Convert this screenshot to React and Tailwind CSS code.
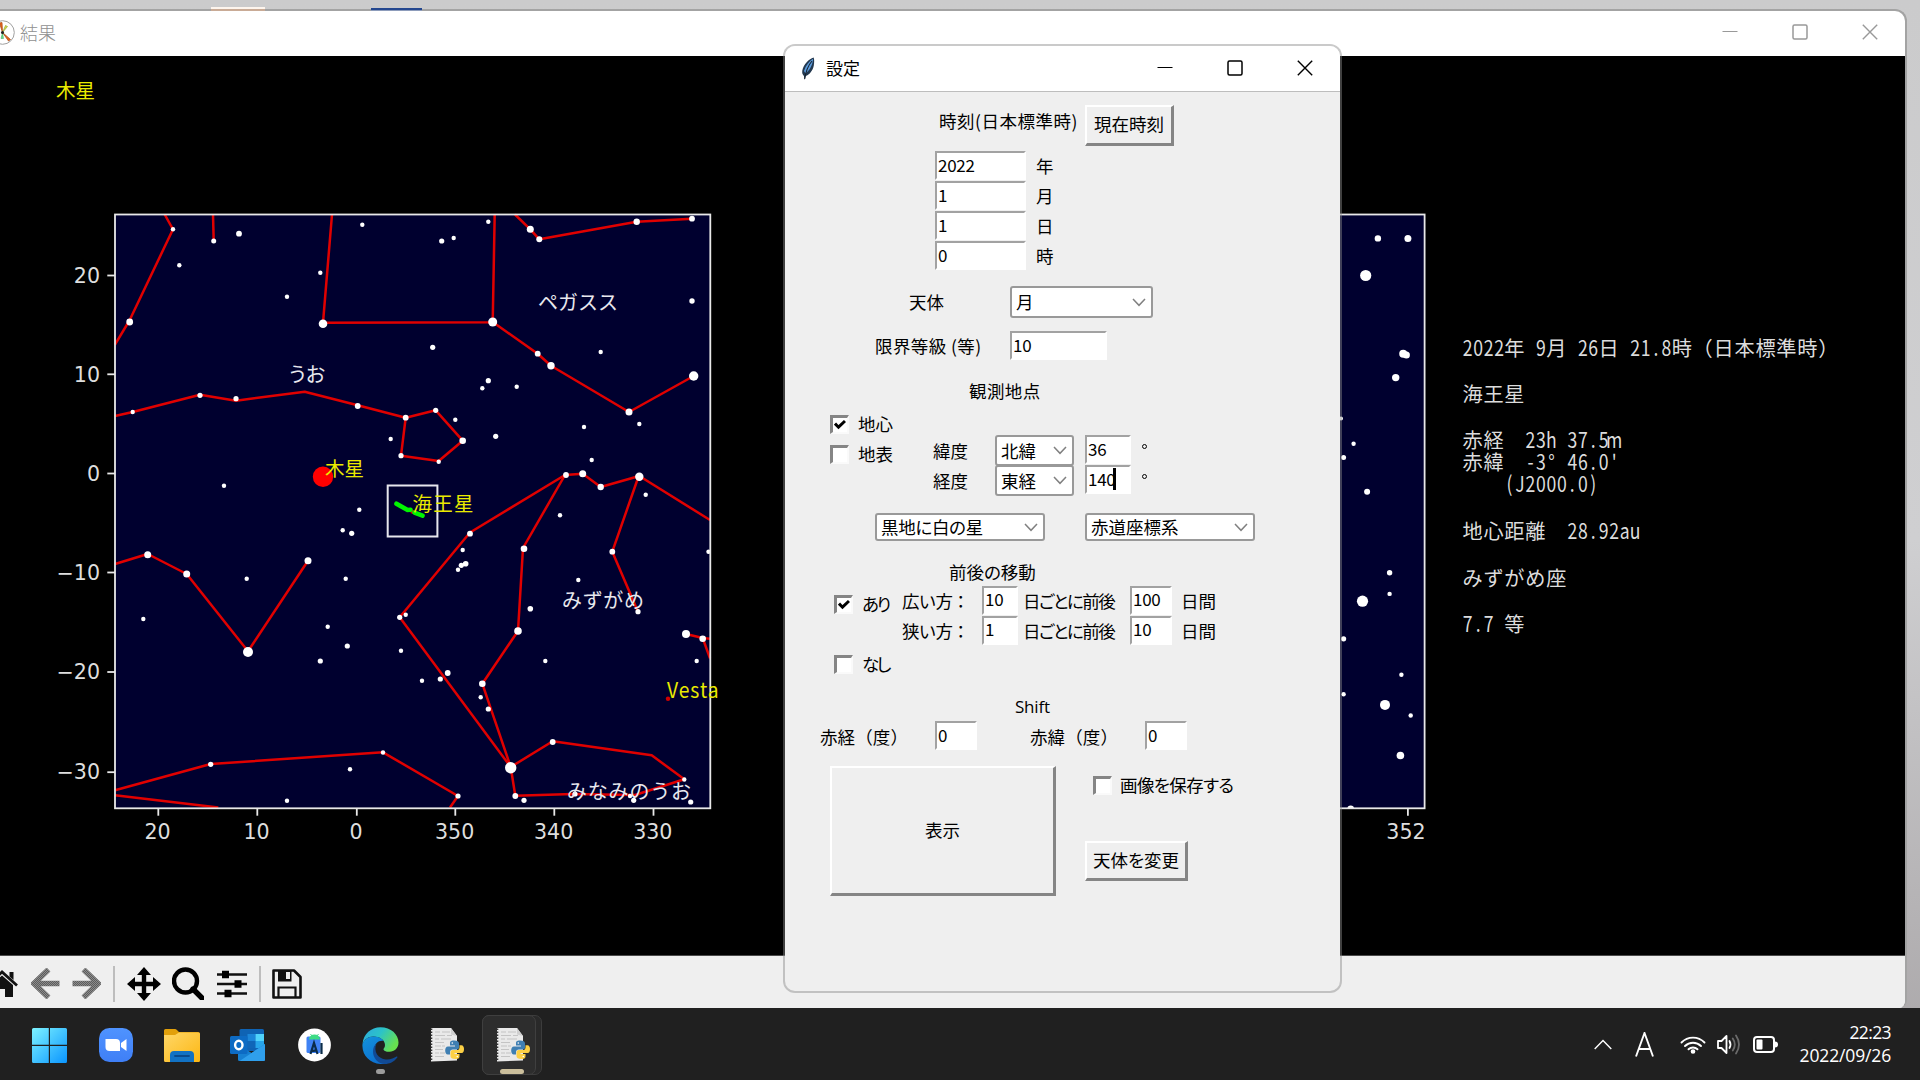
import React from "react";

const JP = '"Noto Sans CJK JP", sans-serif';

/* ---------- star chart data ---------- */

const LINES = [
  "164.7,214.5 173,229.3 129.7,320 115,344.7",
  "213,214.5 213.7,241",
  "332,214.5 323,322.8 492.7,322.3 494.7,214.5",
  "492.7,322 537.7,353.7 551,365.7 629,412 693.7,376",
  "515,214.5 530.3,229.3 539.3,239.3 636.7,221.7 692,218.7",
  "115,416 132.7,412 200,394.7 236,400.7 304.7,391.7 357.7,405.3 405.7,417.7 435.7,410.3 462.7,440.7 438.7,461 401,455.7 405.7,417.7",
  "582.7,473.7 565,475 470,532.5 399.7,617.3 510.7,767",
  "582.7,473.7 600.7,487 639.3,476 710,520",
  "565,475 523,548 518,631 482.3,683.7 510.7,767",
  "638,478 612.3,551.7 638,611.7",
  "686,634 702.7,638 710,638.7",
  "702.7,638 710,658.3",
  "510.7,767 552.7,741.3 651.7,755.3 684.3,779.3 635,795 573,794 515.3,795.7 510.7,767",
  "115,564 147.7,554 186.7,574 248,651.3 308,560.7",
  "115,790.3 210.7,764 383,752.3 458,796 450,807.5",
  "115,795.3 218.3,807.5",
];

const STARS = [
  [173, 229.3, 2.2], [129.7, 322, 3.4], [213.7, 241, 2.5], [239, 233.7, 2.9], [179.3, 265.3, 2.2],
  [287, 296.7, 2.2], [320.3, 272.7, 2.2], [323, 323.7, 4.3], [362.3, 224.7, 2.2], [132.7, 412, 2.2],
  [200, 395.3, 2.6], [236, 398.7, 2.6], [357.7, 406, 2.9], [390.7, 439, 2.2], [224, 485.7, 2.2],
  [359.3, 509.7, 2.2], [488.3, 221.7, 2.2], [441.7, 241, 2.6], [453.7, 238, 2.2], [530.3, 229.3, 3.5],
  [539.3, 239.3, 3], [636.7, 221.7, 3.2], [692, 218.7, 2.9], [492.7, 322, 4.5], [692, 301, 2.7],
  [432.7, 347.3, 2.6], [537.7, 353.7, 2.9], [551, 365.7, 3.7], [600.7, 352, 2.2], [482.3, 388.3, 2.2],
  [488.3, 380.7, 2.6], [516.7, 386.7, 2.2], [693.7, 376, 4.7], [629, 412, 3.5], [639.3, 424, 2.2],
  [405.7, 417.7, 2.9], [435.7, 410.3, 2.6], [455.3, 419.7, 2.2], [462.7, 440.7, 3.3], [495.7, 436.3, 2.6],
  [401, 455.7, 2.6], [438.7, 461.7, 2.2], [584, 427, 2.2], [591.7, 460, 2.2], [566, 475, 2.9],
  [582.7, 473.7, 3.5], [600.7, 487, 3.2], [639.3, 476.7, 4.2], [645.7, 494.7, 2.2], [560, 515.3, 2.2],
  [147.7, 554.7, 3.5], [186.7, 574, 3.5], [246.7, 578.7, 2.2], [308, 560.7, 3.5], [342.7, 530.3, 2.2],
  [351.7, 533.3, 2.6], [345.7, 578.7, 2.2], [143.3, 619, 2.2], [327.7, 626.7, 2.2], [347.3, 646, 2.6],
  [320.3, 661, 2.6], [248, 652, 5], [210.7, 764.3, 2.6], [350, 769.3, 2.2], [383, 752.5, 2.2],
  [287, 800.7, 2.2], [470, 533.7, 2.9], [524, 548.7, 3.3], [462.7, 550, 2.2], [465.7, 563.7, 2.8],
  [461.3, 565.3, 2.6], [458, 569.7, 2.2], [578.3, 580, 2.2], [612.3, 551.7, 2.9], [708.5, 551.7, 2.2],
  [530.3, 608.7, 2.8], [518, 631, 3.8], [399.7, 617.3, 2.6], [405.7, 614.7, 2.2], [638, 611.7, 2.6],
  [686, 634, 4], [702.7, 638.7, 3.3], [545.3, 661, 2.2], [696.7, 661, 2.2], [401, 650.7, 2.2],
  [422, 680.7, 2.2], [440.3, 679, 2.6], [447.7, 673, 2.9], [482.3, 683.7, 3.3], [480.7, 697.3, 2.2],
  [488.3, 709, 2.6], [510.7, 767.7, 5.7], [552.7, 742, 2.9], [515.3, 796, 2.9], [524, 800.3, 2.6],
  [575, 794, 2.6], [630, 796, 2.2], [633.7, 800.3, 2.6], [684.3, 779.5, 2.2], [690.7, 802, 2.6],
  [458, 796, 2.6],
];

const RIGHT_STARS = [
  [1377.9, 238.4, 3.2], [1407.9, 238.4, 3.5], [1365.7, 275.5, 5.6], [1403.2, 353.7, 4], [1406.4, 355.1, 3.5],
  [1395.7, 377.6, 3.7], [1341, 418.4, 2], [1353.6, 443.7, 2.2], [1343.6, 457.6, 2.5], [1367.1, 491.8, 3],
  [1389.6, 572.7, 2.7], [1389.6, 593.9, 2.2], [1362.5, 601.2, 5.6], [1343.6, 638.8, 2.6], [1401.4, 674.7, 2.2],
  [1343.6, 694.3, 2.2], [1385, 704.9, 5], [1410.7, 715.5, 2.2], [1400.4, 755.5, 3.8],
];

const Y_TICKS = [["20", 275.5], ["10", 374.3], ["0", 473.5], ["−10", 572.5], ["−20", 672], ["−30", 772.2]];
const X_TICKS = [["20", 158.3], ["10", 257.3], ["0", 356.8], ["350", 455.3], ["340", 554.3], ["330", 653.5]];

/* Information column: [cell, text] runs laid on a half-width cell grid */
const CELL = 10.46;
const INFO = [
  [356, [[0, "2022"], [4, "年"], [7, "9"], [8, "月"], [11, "26"], [13, "日"], [16, "21.8"], [20, "時"], [22, "（日本標準時）"]]],
  [402, [[0, "海王星"]]],
  [447.5, [[0, "赤経"], [6, "23h"], [10, "37.5m"]]],
  [470, [[0, "赤緯"], [6, "-3°"], [10, "46.0'"]]],
  [492.3, [[4, "(J2000.0)"]]],
  [539.4, [[0, "地心距離"], [10, "28.92au"]]],
  [585.5, [[0, "みずがめ座"]]],
  [632, [[0, "7.7"], [4, "等"]]],
];

function Run({ cell, text, y }) {
  const x0 = 1462.5 + cell * CELL;
  if (text.charCodeAt(0) > 255) {
    const xs = [...text].map((_, i) => x0 + i * CELL * 2).join(" ");
    return <text x={xs} y={y} fontSize="20.2">{text}</text>;
  }
  const k = 0.82;
  const xs = [...text].map((_, i) => ((i + 0.5) * CELL) / k).join(" ");
  return (
    <text transform={`translate(${x0} ${y}) scale(${k} 1)`} x={xs} textAnchor="middle" fontSize="21.5">
      {text}
    </text>
  );
}

function Figure() {
  return (
    <svg className="block flex-none" width="1905" height="900" viewBox="0 56 1905 900">
      <rect x="0" y="56" width="1905" height="900" fill="#000" />
      <rect x="115" y="214.5" width="595.3" height="593.8" fill="#00002f" />
      <g fill="none" stroke="#e00000" strokeWidth="2.5" strokeLinejoin="round">
        {LINES.map((p) => <polyline key={p} points={p} />)}
      </g>
      <g fill="#fff">
        {STARS.map(([x, y, r], i) => <circle key={i} cx={x} cy={y} r={r} />)}
      </g>
      <circle cx="323" cy="476.7" r="10.2" fill="#f00" />
      <rect x="387.7" y="485.5" width="49.7" height="51" fill="none" stroke="#e6e6ee" strokeWidth="2" />
      <circle cx="412.3" cy="511.7" r="2" fill="#e00000" />
      <path d="M396.500 503.700 L407.500 510 L410.500 509.800 M414.500 512.600 L422.500 515.600" fill="none" stroke="#00f500" strokeWidth="4.600" strokeLinecap="round" />
      <circle cx="668" cy="698.7" r="2.2" fill="#d00000" />
      <rect x="115" y="214.5" width="595.3" height="593.8" fill="none" stroke="#e8e8e8" strokeWidth="1.8" />
      <g stroke="#e8e8e8" strokeWidth="1.8">
        {Y_TICKS.map(([t, y]) => <line key={t} x1="107.3" x2="115" y1={y} y2={y} />)}
        {X_TICKS.map(([t, x]) => <line key={t} x1={x} x2={x} y1="808" y2="815.7" />)}
        <line x1="1407.9" x2="1407.9" y1="808" y2="815.7" />
      </g>
      <g fill="#dedede" fontFamily='"DejaVu Sans", sans-serif' fontSize="20.6">
        {Y_TICKS.map(([t, y]) => <text key={t} x="100" y={y + 7.2} textAnchor="end">{t}</text>)}
        {X_TICKS.map(([t, x]) => <text key={t} x={x - 0.7} y="839" textAnchor="middle">{t}</text>)}
        <text x="1406" y="839" textAnchor="middle">352</text>
      </g>

      <g fontFamily={JP} fill="#e8e8ee" fontSize="20">
        <text x="287.5" y="382" textLength="38">うお</text>
        <text x="538" y="310" textLength="80">ペガスス</text>
        <text x="562" y="608" textLength="82">みずがめ</text>
        <text x="567" y="798.5" textLength="124">みなみのうお</text>
      </g>
      <g fontFamily={JP} fill="#eaea00" fontSize="19.5">
        <text x="56" y="97.5">木星</text>
        <text x="325" y="475.5">木星</text>
        <text x="412.5" y="511" textLength="61">海王星</text>
        <text transform="translate(667 698) scale(.92 1)" fontSize="21" textLength="56">Vesta</text>
      </g>

      <rect x="1000" y="214.5" width="424.6" height="593.8" fill="#00002f" />
      <g fill="#fff">
        {RIGHT_STARS.map(([x, y, r], i) => <circle key={i} cx={x} cy={y} r={r} />)}
        <path d="M1347.5 808 a3.2 2.6 0 0 1 6.4 0z" />
      </g>
      <rect x="1000" y="214.5" width="424.6" height="593.8" fill="none" stroke="#e8e8e8" strokeWidth="1.8" />
      <g fontFamily={JP} fill="#dcdcdc">
        {INFO.map(([y, runs]) => runs.map(([c, t]) => <Run key={y + t} cell={c} text={t} y={y} />))}
      </g>
      <path d="M0 955.500h1905" stroke="#4a4a4a" />
    </svg>
  );
}

/* ---------- window controls ---------- */

function Controls({ color, className }) {
  return (
    <div className={className}>
      <svg width="16" height="16" viewBox="0 0 16 16" stroke={color} strokeWidth="1.1" fill="none"><path d="M.5 7.500h15" /></svg>
      <svg width="16" height="16" viewBox="0 0 16 16" stroke={color} strokeWidth="1.5" fill="none"><rect x="1" y="1" width="14" height="14" rx="1.5" /></svg>
      <svg width="16" height="16" viewBox="0 0 16 16" stroke={color} strokeWidth="1.4" fill="none"><path d="M.8.8l14.4 14.4M15.2.8L.8 15.2" /></svg>
    </div>
  );
}

/* ---------- classic form widgets ---------- */

const L = ({ className = "", children }) => (
  <span className={"flex-none whitespace-nowrap text-[17.5px] leading-6 " + className}>{children}</span>
);

const Entry = ({ className = "", children }) => (
  <div className={"flex h-[29px] flex-none items-center border-t-2 border-l-2 border-r-2 border-b-2 border-t-[#a2a2a2] border-l-[#a2a2a2] border-r-white border-b-white bg-white pb-[2px] pl-[1px] text-[17px] leading-5 tracking-[-0.3px] " + className}>
    {children}
  </div>
);

const Combo = ({ className = "", children }) => (
  <div className={"flex flex-none items-center justify-between rounded-[3px] border-2 border-[#999] bg-white pr-[5px] pl-[4px] text-[17.5px] leading-6 " + className}>
    <span className="whitespace-nowrap">{children}</span>
    <svg width="14" height="9" viewBox="0 0 14 9" fill="none" stroke="#808080" strokeWidth="1.5"><path d="M1 1l6 6.3L13 1" /></svg>
  </div>
);

const Check = ({ on, className = "" }) => (
  <div className={"flex h-[19px] w-[19px] flex-none items-center justify-center border-t-[3px] border-l-[3px] border-r-2 border-b-2 border-t-[#858585] border-l-[#858585] border-r-[#fafafa] border-b-[#fafafa] bg-white " + className}>
    {on && <svg width="12" height="12" viewBox="0 0 12 12" fill="none" stroke="#000" strokeWidth="3"><path d="M1 4.6l3.5 3.600L11 2" /></svg>}
  </div>
);

const Button = ({ className = "", children }) => (
  <div className={"flex flex-none items-center justify-center border-t-2 border-l-2 border-r-[3px] border-b-[3px] border-t-white border-l-white border-r-[#858585] border-b-[#858585] bg-[#efefef] text-[17.5px] leading-6 whitespace-nowrap " + className}>
    {children}
  </div>
);

const Row = ({ className = "", children }) => <div className={"flex items-center " + className}>{children}</div>;

function Feather() {
  return (
    <svg width="14" height="24" viewBox="0 0 14 24">
      <path d="M12.6.6C8 2 2.600 7.500 1.300 13.500c-.4 2.500.2 4 1.600 5.500L3.600 23l1-4c4-1 7.400-6 8.200-10.500.5-3 .6-6-.2-7.900z" fill="#23384f" />
      <path d="M12 1.800C8.500 4 5 8 3 14l1.500 2.500C9 13 12 7 12 1.800z" fill="#5b9bdc" />
      <path d="M11 4C7.500 8 5 13 3.700 22" stroke="#16202c" strokeWidth="1.100" fill="none" />
    </svg>
  );
}

function Dialog() {
  return (
    <div className="absolute left-[783px] top-[44px] h-[949px] w-[559px] overflow-hidden rounded-[12px] border-2 border-[#8c8c8c75] bg-[#efefef] bg-clip-padding text-black">
      <div className="flex h-[46px] items-center border-b border-[#bdbdbd] bg-white pl-[16px] pr-[27px]">
        <Feather />
        <span className="mb-[2px] ml-[11px] text-[17px] leading-6">設定</span>
        <Controls color="#000" className="mb-[2px] ml-auto flex gap-[54px]" />
      </div>

      <Row className="mt-[13px] h-[40px]">
        <L className="mb-[9px] ml-[154px] w-[146px] tracking-[0.5px]">時刻(日本標準時)</L>
        <Button className="h-[41px] w-[89px] pb-px">現在時刻</Button>
      </Row>
      <div className="mt-[6px] flex flex-col">
        {[["2022", "年"], ["1", "月"], ["1", "日"], ["0", "時"]].map(([v, u]) => (
          <Row key={u} className="h-[30px]">
            <Entry className="mb-px ml-[150px] w-[91px]">{v}</Entry>
            <L className="ml-[10px]">{u}</L>
          </Row>
        ))}
      </div>

      <Row className="mt-[15px] h-[32px]">
        <L className="mb-px ml-[124px] w-[101px]">天体</L>
        <Combo className="h-[32px] w-[143px]">月</Combo>
      </Row>
      <Row className="mt-[13px] h-[29px]">
        <L className="ml-[90px] w-[135px] tracking-[0.4px]">限界等級 (等)</L>
        <Entry className="w-[97px]">10</Entry>
      </Row>

      <L className="mt-[19px] block pl-[184px] tracking-[0.4px]">観測地点</L>
      <div className="mt-[9px] flex h-[86px]">
        <div className="-mt-[3px] ml-[45px] w-[103px]">
          <Row className="h-[30px]"><Check on className="mr-[9px]" /><L>地心</L></Row>
          <Row className="h-[30px]"><Check className="mr-[9px]" /><L>地表</L></Row>
        </div>
        <div className="mt-[23px] flex flex-col">
          {[["緯度", "北緯", "36"], ["経度", "東経", "140"]].map(([a, b, c]) => (
            <Row key={a} className="h-[30px] items-start">
              <L className="mt-[4px] w-[62px]">{a}</L>
              <Combo className="h-[31px] w-[79px]">{b}</Combo>
              <Entry className="ml-[11px] w-[46px]">
                {c}
                {c === "140" && <span className="-ml-[2px] h-[22px] w-[3px] flex-none bg-black" />}
              </Entry>
              <span className="mt-[9px] ml-[11px] h-[5px] w-[5px] rounded-full border-[1.5px] border-black" />
            </Row>
          ))}
        </div>
      </div>

      <Row className="mt-[13px] h-[32px]">
        <Combo className="ml-[90px] w-[170px] tracking-[-0.3px] [font-feature-settings:'palt']">黒地に白の星</Combo>
        <Combo className="ml-[40px] w-[170px]">赤道座標系</Combo>
      </Row>

      <L className="mt-[17px] block pl-[164px] [font-feature-settings:'palt']">前後の移動</L>
      <div className="mt-px flex">
        <div className="ml-[49px] w-[68px] pt-[4px]">
          <Row className="h-[30px]"><Check on className="mr-[9px]" /><L className="tracking-[-2.5px] [font-feature-settings:'palt']">あり</L></Row>
          <Row className="mt-[30px] h-[30px]"><Check className="mr-[9px]" /><L className="tracking-[-2.5px] [font-feature-settings:'palt']">なし</L></Row>
        </div>
        <div className="flex flex-col">
          {[["広い方：", "10", "100"], ["狭い方：", "1", "10"]].map(([a, b, c]) => (
            <Row key={a} className="h-[30px]">
              <L className="mt-[2px] w-[80px] tracking-[-0.8px]">{a}</L>
              <Entry className="w-[36px]">{b}</Entry>
              <L className="mt-[2px] ml-[5px] w-[107px] tracking-[-1.5px] [font-feature-settings:'palt']">日ごとに前後</L>
              <Entry className="w-[42px]">{c}</Entry>
              <L className="mt-[2px] ml-[9px]">日間</L>
            </Row>
          ))}
        </div>
      </div>

      <span className="mt-[16px] block pl-[230px] font-['Open_Sans',sans-serif] text-[17px] leading-6 tracking-[-0.2px]">Shift</span>
      <Row className="mt-[2px] h-[29px]">
        <L className="ml-[35px] mt-[2px] w-[115px] tracking-[0.1px]">赤経（度）</L>
        <Entry className="w-[42px]">0</Entry>
        <L className="ml-[53px] mt-[2px] w-[115px] tracking-[0.1px]">赤緯（度）</L>
        <Entry className="w-[42px]">0</Entry>
      </Row>

      <div className="mt-[16px] flex">
        <Button className="ml-[45px] h-[130px] w-[226px] pb-[2px]">表示</Button>
        <div className="ml-[29px] flex flex-col">
          <Row className="mt-[4px] ml-[8px] h-[30px]">
            <Check className="mr-[8px]" />
            <L className="tracking-[-0.6px] [font-feature-settings:'palt']">画像を保存する</L>
          </Row>
          <Button className="mt-[41px] h-[40px] w-[103px] pb-px [font-feature-settings:'palt']">天体を変更</Button>
        </div>
      </div>
    </div>
  );
}

/* ---------- plot toolbar ---------- */

function Toolbar() {
  return (
    <div className="flex h-[52px] flex-none items-center bg-[#efefef] pt-[3px]">
      <svg className="-ml-[14px] flex-none" width="32" height="28" viewBox="0 0 32 28">
        <path d="M16 5.500L5 15v12h8v-8h6v8h8V15z" fill="#111" />
        <path d="M1 15.500L16 2l15 13.500" fill="none" stroke="#111" strokeWidth="2.800" />
        <path d="M23.500 2h4v8l-4-3.500z" fill="#111" />
      </svg>
      {[false, true].map((flip) => (
        <svg key={String(flip)} className={flip ? "ml-[12px] flex-none -scale-x-100" : "ml-[13px] flex-none"} width="29" height="31" viewBox="0 0 29 31">
          <defs>
            <pattern id={flip ? "dotF" : "dotB"} width="2" height="2" patternUnits="userSpaceOnUse">
              <rect width="2" height="2" fill="#8c8c8c" /><path d="M0 0h1v1H0zM1 1h1v1H1z" fill="#5c5c5c" />
            </pattern>
          </defs>
          <path d="M17.500 1.500L3 15.500l14.500 14M4 15.500h24.500" fill="none" stroke={flip ? "url(#dotF)" : "url(#dotB)"} strokeWidth="5.500" />
        </svg>
      ))}
      <div className="ml-[12px] h-[36px] w-[2px] bg-[#bdbdbd]" />
      <svg className="ml-[12px] flex-none" width="34" height="34" viewBox="0 0 34 34">
        <path d="M17 3v28M3 17h28" stroke="#000" strokeWidth="4.400" />
        <path d="M17 0l7 8h-14zM17 34l7-8h-14zM0 17l8-7v14zM34 17l-8-7v14z" fill="#000" />
      </svg>
      <svg className="ml-[11px] flex-none" width="32" height="33" viewBox="0 0 32 33" fill="none" stroke="#000">
        <circle cx="13.500" cy="14" r="11.500" strokeWidth="4.400" />
        <path d="M21 22l9 9" strokeWidth="5.400" strokeLinecap="round" />
      </svg>
      <svg className="ml-[13px] flex-none" width="30" height="28" viewBox="0 0 30 28">
        <path d="M0 4.500h30M0 14h30M0 23.500h30" stroke="#111" strokeWidth="2.600" />
        <path d="M5 .8h7v7.400H5zM17.500 10.300h7v7.400h-7zM7.500 19.800h7v7.400h-7z" fill="#000" />
      </svg>
      <div className="ml-[12px] h-[36px] w-[2px] bg-[#bdbdbd]" />
      <svg className="ml-[11px] flex-none" width="30" height="30" viewBox="0 0 30 30">
        <path d="M1.500 1.500h20.500L28.500 8v20.500h-27z" fill="none" stroke="#111" strokeWidth="2.600" strokeLinejoin="round" />
        <path d="M6 2h13.500v10.500H6z" fill="#111" />
        <path d="M14 3h4v7h-4z" fill="#efefef" />
        <path d="M6.500 28V18.500h17V28" fill="none" stroke="#111" strokeWidth="2.200" />
      </svg>
    </div>
  );
}

/* ---------- taskbar ---------- */

function PyFile({ className = "" }) {
  return (
    <svg className={className} width="34" height="36" viewBox="0 0 34 36">
      <path d="M1 1h20l6 8v24.500l-26 1z" fill="#e9e9e9" />
      <path d="M1.500 1.500v33" stroke="#333" strokeWidth="1.600" strokeDasharray="1.500 1.500" />
      <path d="M5 5h5M12 5h8M5 8.500h10M17 8.500h5M5 12h4M11 12h10M5 15.500h9M5 19h6M12 19h3M5 22.500h8M5 26h4M10 26h5M5 29.500h9" stroke="#c4c4c4" strokeWidth="1.200" />
      <path d="M21 1l6 8-6-1.500z" fill="#cfcfcf" />
      <path d="M24 13.500c-3.500 0-4 1.200-4 3v2h5v1h-7c-2 0-2.800 2-2.800 4s.8 4 2.600 4H20v-2.300c0-1.700 1.200-2.700 2.800-2.700h4c1.500 0 2.200-1 2.200-2.300V16.500c0-2-1.500-3-5-3z" fill="#3f7fb3" />
      <path d="M25.500 32c3.500 0 4-1.200 4-3v-2h-5v-1h7c2 0 2.500-2 2.500-4s-.8-3.800-2.500-3.800h-2v2.300c0 1.700-1.200 2.600-2.700 2.600h-4c-1.500 0-2.300 1-2.300 2.400V29c0 2 1.500 3 5 3z" fill="#fcd045" />
      <circle cx="22.300" cy="16" r=".8" fill="#fff" />
      <circle cx="27.300" cy="29.500" r=".8" fill="#fff" />
    </svg>
  );
}

function Taskbar() {
  return (
    <div className="flex h-[72px] flex-none items-start bg-[#202020] text-white">
      <svg className="mt-[20px] ml-[32px] flex-none" width="35" height="35" viewBox="0 0 35 35">
        <defs><linearGradient id="win" gradientUnits="userSpaceOnUse" x1="0" y1="0" x2="35" y2="35"><stop offset="0" stopColor="#7df3ff" /><stop offset="1" stopColor="#0a95ff" /></linearGradient></defs>
        <path d="M1.500 0H16.800v16.800H0V1.500Q0 0 1.500 0zM18 0h15.500Q35 0 35 1.500v15.300H18zM0 18h16.800v17H1.500Q0 35 0 33.500zM18 18h17v15.500q0 1.500-1.500 1.500H18z" fill="url(#win)" />
      </svg>
      <svg className="mt-[20px] ml-[32px] flex-none" width="34" height="34" viewBox="0 0 34 34">
        <defs><linearGradient id="zm" x1="0" y1="0" x2="0" y2="1"><stop offset="0" stopColor="#4f93ff" /><stop offset="1" stopColor="#3f7ff6" /></linearGradient></defs>
        <rect width="34" height="34" rx="10.500" fill="url(#zm)" />
        <path d="M6.500 11h10.500q4 0 4 4v8H10.500q-4 0-4-4z" fill="#fff" />
        <path d="M22 15l5.500-4v12L22 19z" fill="#fff" />
      </svg>
      <svg className="mt-[21px] ml-[31px] flex-none" width="36" height="33" viewBox="0 0 36 33">
        <defs><linearGradient id="fd" x1="0" y1="0" x2="1" y2="1"><stop offset="0" stopColor="#ffd768" /><stop offset="1" stopColor="#fcb713" /></linearGradient></defs>
        <path d="M0 1.500Q0 0 1.500 0h9.500q1 0 1.700.8L15 3h19q2 0 2 2v6H0z" fill="#e2a00b" />
        <path d="M0 6h11l4-2.500h19.500Q36 3.500 36 5v26.500q0 1.500-1.500 1.500h-33Q0 33 0 31.500z" fill="url(#fd)" />
        <path d="M6 33v-7q0-4 4-4h16q4 0 4 4v7z" fill="#1272c4" />
        <path d="M11 27h14" stroke="#0a4a8c" strokeWidth="1.800" strokeLinecap="round" />
      </svg>
      <svg className="mt-[21px] ml-[30px] flex-none" width="35" height="32" viewBox="0 0 35 32">
        <rect x="9.500" y="0" width="24.500" height="22" rx="1.500" fill="#0f63b4" />
        <path d="M17.500 5h8v7h-8z" fill="#1c86d9" /><path d="M25.500 5H34v7h-8.500z" fill="#50d3fb" /><path d="M17.500 12h8v7h-8z" fill="#1066b8" /><path d="M25.500 12H34v7h-8.500z" fill="#27a5ea" />
        <path d="M8 15l13.500 9L35 15v15.500q0 1.500-1.500 1.500h-24Q8 32 8 30.500z" fill="#1680d2" />
        <path d="M35 15L10 31.700q.5.300 1 .3h22.500q1.500 0 1.500-1.500z" fill="#2f9fec" />
        <rect x="0" y="7" width="17.500" height="18" rx="1.500" fill="#0d6bc4" />
        <ellipse cx="8.800" cy="16" rx="3.700" ry="4.200" fill="none" stroke="#fff" strokeWidth="2.400" />
      </svg>
      <svg className="mt-[20px] ml-[33px] flex-none" width="33" height="34" viewBox="0 0 33 34">
        <circle cx="16.500" cy="17" r="16.400" fill="#fff" />
        <rect x="8.500" y="8.500" width="14" height="16.500" rx="1.500" fill="#3f82f4" />
        <path d="M11 11.500a5.500 5 0 0 1 11 0z" fill="#3ddc84" />
        <path d="M12.500 6l1.500 2M20.500 6L19 8" stroke="#3ddc84" strokeWidth="1" />
        <path d="M12.500 26l3.500-11 3.500 11M13 22.500q3 1 5.500-.5M23.500 15v11" stroke="#0b2c49" strokeWidth="2.200" fill="none" />
      </svg>
      <div className="mt-[19px] ml-[31px] flex w-[37px] flex-none flex-col items-center">
        <svg width="37" height="37" viewBox="0 0 37 37">
          <defs>
            <linearGradient id="e1" x1="0" y1="0" x2="1" y2="0.5"><stop offset="0" stopColor="#2ca7e0" /><stop offset=".5" stopColor="#2cc3c8" /><stop offset="1" stopColor="#67e04f" /></linearGradient>
            <linearGradient id="e2" x1="0" y1="0" x2="0.6" y2="1"><stop offset="0" stopColor="#1393dc" /><stop offset="1" stopColor="#0c6fd0" /></linearGradient>
          </defs>
          <path d="M.5 17C1.500 7 9 .3 18.500.3 29 .3 36.500 7.500 36.500 15.500c0 5.500-4 9.300-9 9.300-3.500 0-6-1.200-6-2.600 0-.8 1.500-1.500 1.500-4.200C23 13 17.500 9.500 11.500 9.500 6 9.500 2 13 .5 17z" fill="url(#e1)" />
          <path d="M.5 17C2 12.500 6.500 9.500 11.500 9.500c5 0 8.500 2 10.300 4.600-5-1.300-10 3-9.300 9.400.7 7 6 12.300 12.500 13-2 .5-4 .6-6.500.5C7.500 36.500-.5 27.500.5 17z" fill="url(#e2)" />
          <path d="M14.500 16.500C11 24 16 32 24 32.500c4.500.3 8-1.500 10.500-3 .7-.4 1.200.3.8 1-3.300 4.500-8 6.500-12.300 6.500-7 0-12-6-12-12.500 0-3.500 1.300-6.500 3.500-8z" fill="#114a95" />
        </svg>
        <div className="mt-[5px] h-[5px] w-[9px] rounded-full bg-[#9c9c9c]" />
      </div>
      <PyFile className="mt-[19px] ml-[31px] flex-none" />
      <div className="mt-[7px] ml-[18px] flex h-[60px] w-[60px] flex-none rounded-[7px] border border-[#3c3c3c] bg-[#292929]">
        <div className="-mt-px -ml-px flex h-[60px] w-[54px] flex-col items-center rounded-[7px] border border-[#3f3f3f] bg-[#2d2d2d] pt-[11px]">
          <PyFile className="ml-[7px]" />
          <div className="mt-[6px] ml-[6px] h-[5px] w-[24px] flex-none rounded-full bg-[#cbbf9c]" />
        </div>
      </div>

      <div className="ml-auto flex h-[72px] items-center">
        <svg width="18" height="11" viewBox="0 0 18 11" fill="none" stroke="#fff" strokeWidth="1.400"><path d="M.7 10L9 1.500l8.300 8.500" /></svg>
        <svg className="ml-[23px]" width="19" height="25" viewBox="0 0 19 25" fill="none" stroke="#fff" strokeWidth="1.900"><path d="M1 24.500L9.500 1 18 24.500M3.800 17h11.400" /></svg>
        <svg className="ml-[26px]" width="26" height="19" viewBox="0 0 26 19" fill="none" stroke="#fff" strokeWidth="1.900" strokeLinecap="round">
          <path d="M1.500 7.500a16 16 0 0 1 23 0M5 11a11.300 11.300 0 0 1 16 0M8.500 14.300a6.500 6.500 0 0 1 9 0" />
          <circle cx="13" cy="16.500" r="1.400" fill="#fff" />
        </svg>
        <svg className="ml-[11px]" width="24" height="21" viewBox="0 0 24 21" fill="none" strokeWidth="1.800" strokeLinejoin="round" strokeLinecap="round">
          <path d="M1 7h3.500L9.500 2v17l-5-5H1z" stroke="#fff" />
          <path d="M12.500 7q2 3.500 0 7" stroke="#fff" />
          <path d="M15.800 4.500q4 6 0 12M19 1.500q6 9 0 18" stroke="#6b6b6b" />
        </svg>
        <svg className="ml-[12px]" width="25" height="17" viewBox="0 0 25 17">
          <rect x="1" y="1" width="20" height="15" rx="3" fill="none" stroke="#fff" strokeWidth="2" />
          <rect x="3.500" y="3.500" width="6" height="10" rx="1" fill="#fff" />
          <path d="M22 5.500q3 0 3 3t-3 3z" fill="#fff" />
        </svg>
        <div className="mr-[29px] ml-[19px] flex w-[94px] flex-col items-end font-['Open_Sans',sans-serif] text-[17.5px] leading-[23px]">
          <span className="tracking-[-0.6px]">22:23</span>
          <span className="tracking-[-0.15px]">2022/09/26</span>
        </div>
      </div>
    </div>
  );
}

/* ---------- desktop ---------- */

export default function App() {
  return (
    <div className="relative flex h-[1080px] w-[1920px] flex-col overflow-hidden bg-gradient-to-b from-[#cbcbcc] via-[#cfcfd1] to-[#a9a6a8] font-['Noto_Sans_CJK_JP',sans-serif]">
      <div className="flex h-[9px] flex-none items-start pt-[7px]">
        <div className="relative z-10 ml-[211px] h-[4px] w-[54px] flex-none border-t-2 border-[#fdf5ee] bg-[#c9ab96]" />
        <div className="relative z-10 mt-px ml-[106px] h-[3px] w-[51px] flex-none border-t-2 border-[#24478f] bg-[#8d9cbb]" />
      </div>
      <div className="flex h-[999px] w-[1907px] flex-none flex-col overflow-hidden rounded-tr-[12px] rounded-br-[8px] border-t-2 border-r-2 border-[#a3a3a3] bg-white">
        <div className="flex h-[45px] flex-none items-center">
          <svg className="mb-[3px] -ml-[10px]" width="25" height="25" viewBox="0 0 25 25">
            <circle cx="12.500" cy="12.500" r="11.800" fill="#fff" stroke="#a0a0a0" strokeWidth="1" />
            <path d="M12.500 12.500L9.500 3l2.500-.5zM12.500 12.500l8 7-2 1.500z" fill="#e8641b" stroke="#b0521a" strokeWidth=".8" />
            <path d="M12.500 12.500l3-7 2 1z" fill="#cfe04a" stroke="#8a9a2a" strokeWidth=".6" />
            <path d="M12.500 12.500l1 6h-2.500z" fill="#5fe08a" stroke="#3fa05a" strokeWidth=".5" />
            <circle cx="12.500" cy="12.500" r="1.500" fill="#222" />
          </svg>
          <span className="mb-[4px] ml-[5px] text-[18px] leading-6 font-light text-[#909090]">結果</span>
          <Controls color="#999" className="mb-[3px] mr-[27px] ml-auto flex gap-[54px]" />
        </div>
        <Figure />
        <Toolbar />
      </div>
      <Taskbar />
      <Dialog />
    </div>
  );
}
